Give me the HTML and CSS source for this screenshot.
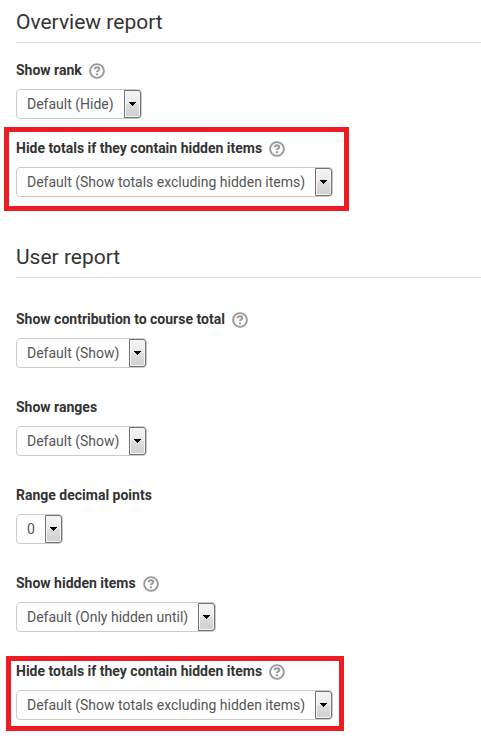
FILE: index.html
```html
<!DOCTYPE html>
<html lang="en">
<head>
<meta charset="utf-8">
<title>Grade report settings</title>
<link rel="stylesheet" href="styles.css">
</head>
<body>
<svg width="0" height="0" class="sprite">
  <symbol id="help" viewBox="0 0 16 16">
    <circle cx="8" cy="8" r="6.9" fill="none" stroke="#999" stroke-width="1.9"/>
    <path d="M5.6 6.3C5.7 4.8 6.7 4.3 8 4.3c1.4 0 2.3.7 2.3 1.8 0 1.6-2.3 1.5-2.3 3" fill="none" stroke="#999" stroke-width="2"/>
    <path d="M7 10.2h2v2H7z" fill="#999"/>
  </symbol>
  <symbol id="arrow" viewBox="0 0 7 4"><path d="M0 0h7v1H6v1H5v1H4v1H3V3H2V2H1V1H0z" fill="#000" shape-rendering="crispEdges"/></symbol>
</svg>
<main class="settings">
  <section class="report overview">
    <h2 class="title">Overview report</h2>
    <div class="fields">
      <div class="field">
        <div class="label"><span>Show rank</span><svg class="help"><use href="#help"/></svg></div>
        <div class="select w-hide"><span class="value">Default (Hide)</span><span class="button"><svg class="arrow"><use href="#arrow"/></svg></span></div>
      </div>
      <div class="field marked marked-first">
        <div class="label"><span>Hide totals if they contain hidden items</span><svg class="help"><use href="#help"/></svg></div>
        <div class="select w-totals"><span class="value">Default (Show totals excluding hidden items)</span><span class="button"><svg class="arrow"><use href="#arrow"/></svg></span></div>
      </div>
    </div>
  </section>
  <section class="report user">
    <h2 class="title">User report</h2>
    <div class="fields">
      <div class="field">
        <div class="label"><span>Show contribution to course total</span><svg class="help"><use href="#help"/></svg></div>
        <div class="select w-show"><span class="value">Default (Show)</span><span class="button"><svg class="arrow"><use href="#arrow"/></svg></span></div>
      </div>
      <div class="field">
        <div class="label"><span>Show ranges</span></div>
        <div class="select w-show"><span class="value">Default (Show)</span><span class="button"><svg class="arrow"><use href="#arrow"/></svg></span></div>
      </div>
      <div class="field">
        <div class="label"><span>Range decimal points</span></div>
        <div class="select w-zero"><span class="value">0</span><span class="button"><svg class="arrow"><use href="#arrow"/></svg></span></div>
      </div>
      <div class="field">
        <div class="label"><span>Show hidden items</span><svg class="help"><use href="#help"/></svg></div>
        <div class="select w-until"><span class="value">Default (Only hidden until)</span><span class="button"><svg class="arrow"><use href="#arrow"/></svg></span></div>
      </div>
      <div class="field marked marked-last">
        <div class="label"><span>Hide totals if they contain hidden items</span><svg class="help"><use href="#help"/></svg></div>
        <div class="select w-totals"><span class="value">Default (Show totals excluding hidden items)</span><span class="button"><svg class="arrow"><use href="#arrow"/></svg></span></div>
      </div>
    </div>
  </section>
</main>
</body>
</html>
```
FILE: styles.css
```css
*, *::after { box-sizing: border-box; }
body { margin: 0; background: #fff; color: #333; font-family: Roboto, "Liberation Sans", sans-serif; overflow: hidden; }
.sprite { position: absolute; }
.settings { height: 740px; padding-left: 16px; }
.title { margin: 0; height: 43px; border-bottom: 1px solid #ddd; font-size: 21px; font-weight: 400; line-height: 44px; }
.fields { display: flex; flex-direction: column; }
.overview .fields { gap: 20px; padding-top: 18px; }
.user { margin-top: 38px; }
.user .fields { gap: 30px; padding-top: 32px; }
.field { position: relative; height: 58px; }
.label { display: flex; align-items: center; height: 20px; margin-bottom: 8px; font-size: 14px; font-weight: 700; line-height: 20px; white-space: nowrap; }
.label span { padding-bottom: 2px; }
.help { width: 16px; height: 16px; margin-left: 7px; }
.select { display: flex; justify-content: space-between; height: 30px; padding: 0 0 0 10px; border: 1px solid #ccc; border-radius: 4px; color: #555; font-size: 14px; line-height: 28px; white-space: nowrap; }
.button { display: flex; align-items: center; justify-content: center; width: 17px; height: 28px; border: 1px solid #707070; border-radius: 0 3px 3px 0; background: linear-gradient(#f3f3f3 0%, #ebebeb 50%, #ddd 50%, #cfcfcf 100%); box-shadow: inset 0 0 0 1px #f8f8f8; }
.arrow { width: 7px; height: 4px; }
.w-hide { width: 126px; }
.w-totals { width: 317px; }
.w-show { width: 131px; }
.w-zero { width: 47px; }
.w-until { width: 200px; }
.marked::after { content: ""; position: absolute; border: 5px solid #ed1c24; }
.marked-first::after { top: -12px; left: -12px; width: 345px; height: 84px; }
.marked-last::after { top: -6px; left: -10px; width: 338px; height: 75px; }
```
